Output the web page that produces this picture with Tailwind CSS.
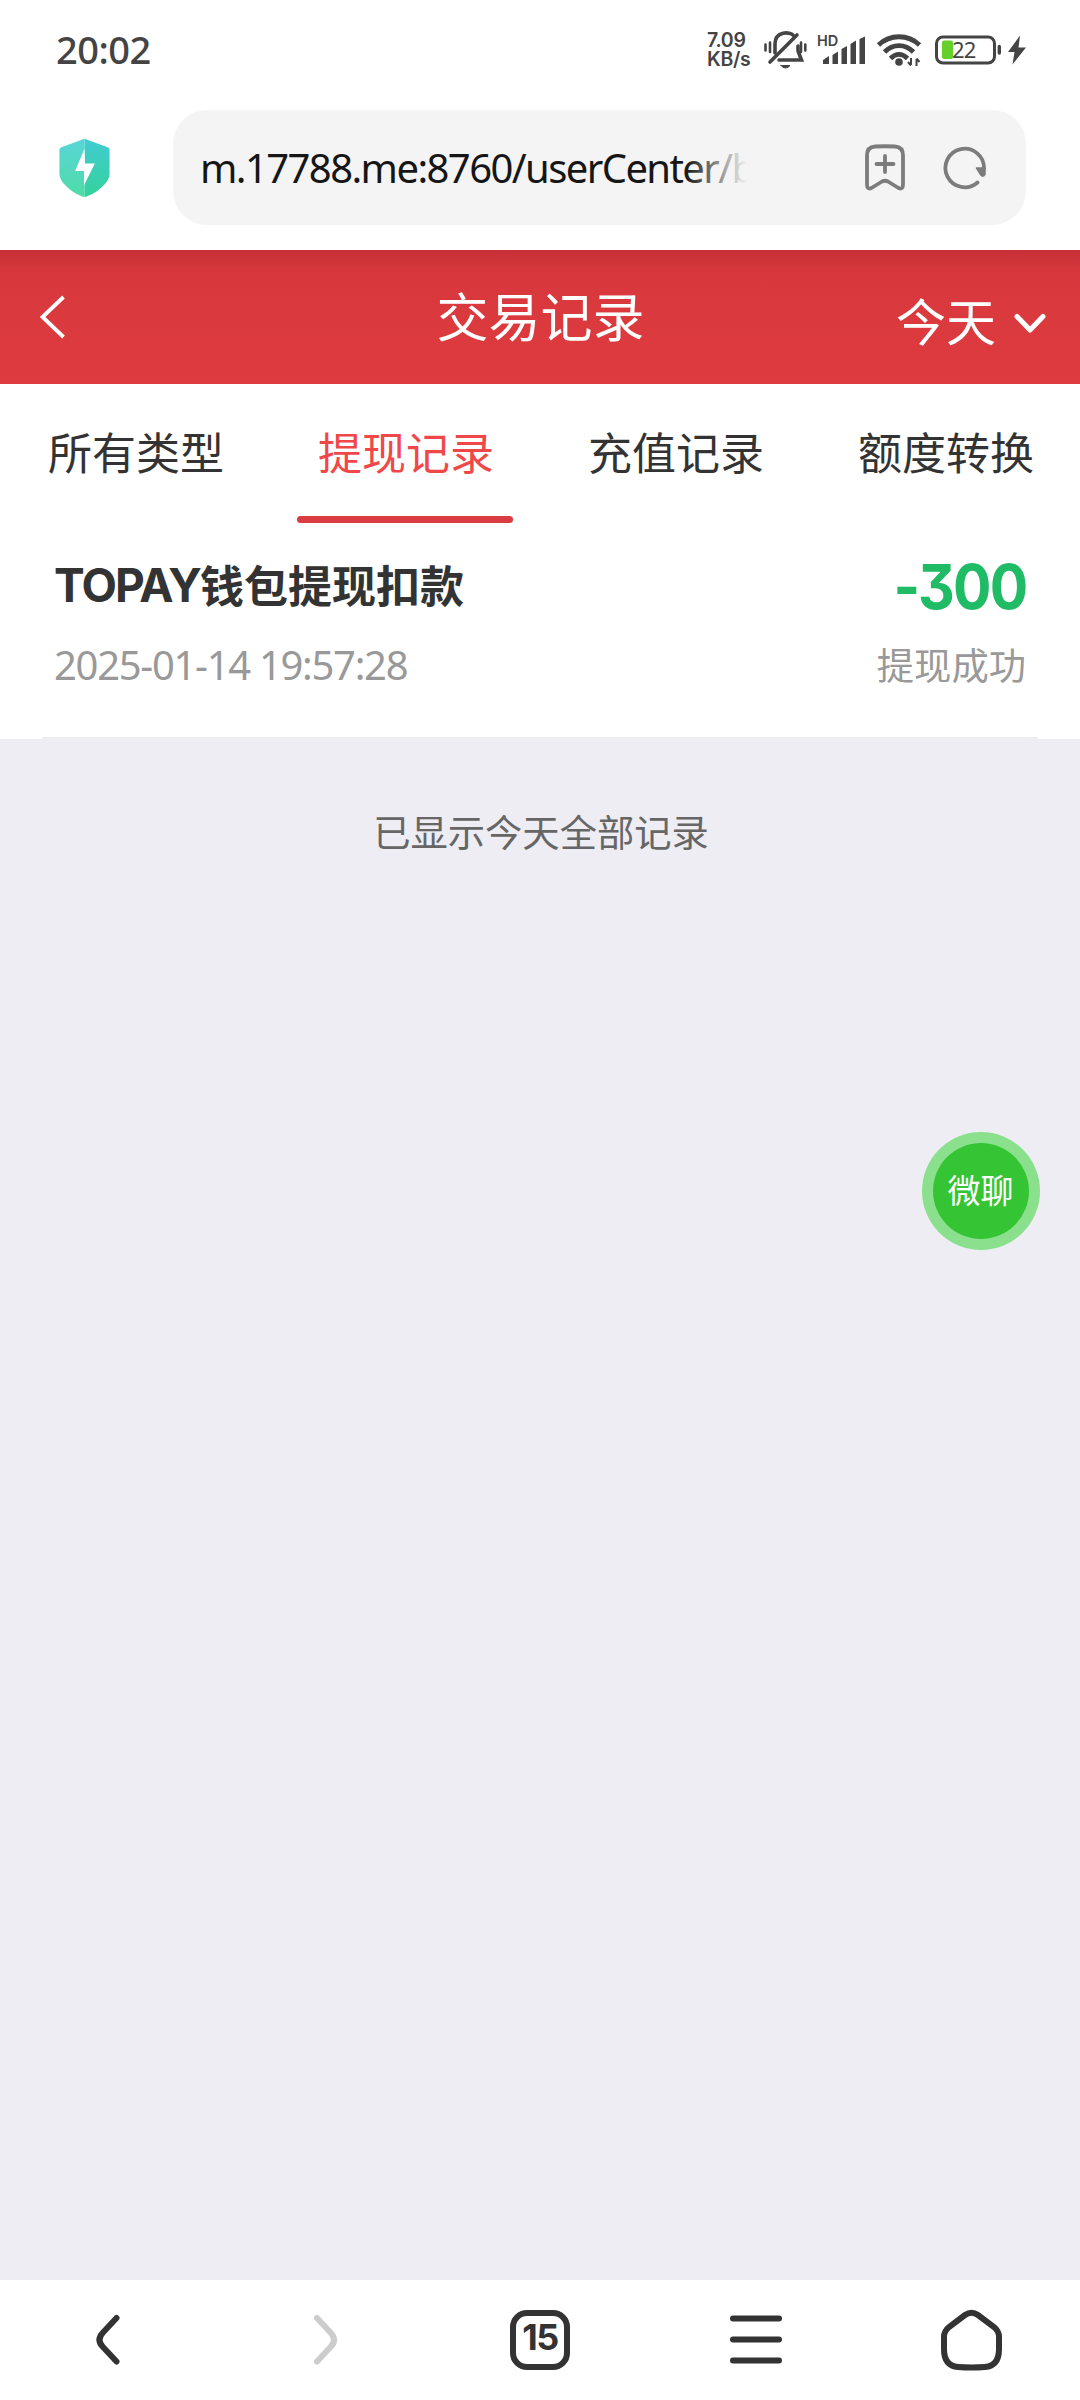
<!DOCTYPE html>
<html lang="zh-CN">
<head>
<meta charset="utf-8">
<title>交易记录</title>
<script src="https://cdn.jsdelivr.net/npm/@tailwindcss/browser@4"></script>
</head>
<body class="w-[1080px] h-[2400px] flex flex-col bg-[#eeedf3] overflow-hidden font-['Noto_Sans_CJK_SC',sans-serif] text-[#333]">

<!-- Status bar -->
<div class="h-[100px] shrink-0 bg-white flex items-center pl-[56px] pr-[54px] text-[#444]">
  <span class="font-['Noto_Sans'] font-medium text-[38px] leading-none tracking-[-0.5px] pb-[3px]">20:02</span>
  <div class="ml-auto flex items-center">
    <div class="w-[56px] flex flex-col font-['Inter'] font-semibold text-[19.500px] leading-[19.500px] tracking-[-0.3px]"><span>7.09</span><span>KB/s</span></div>
    <svg class="w-[44px] h-[40px]" viewBox="763 30 44 40" fill="none" stroke="#444" stroke-width="3.6" stroke-linecap="round">
      <path d="M775 53V44C775 31 790 31 794 36M798 46V51L801.500 60H779"/><path d="M770 62L797 35"/><path d="M781 65.500H790Q788 68 785.500 68T781 65.500Z" fill="#444" stroke-width="1"/><path d="M765.500 44.500V50.500M770 42.500V52M801 42.500V52M805.300 44.500V50.500" stroke-width="2.600"/>
    </svg>
    <svg class="ml-[10px] w-[50px] h-[36px]" viewBox="817 32 50 36" fill="#444">
      <text x="817" y="46" font-family="Inter" font-weight="600" font-size="14.500" letter-spacing="0">HD</text>
      <path d="M823 64V60L829 56V64ZM832.500 64V55L838 51.500V64ZM841.500 64V49L847 46V64ZM850.500 64V44L856 40.500V64ZM859.500 64V39L865 36.500V64Z"/>
    </svg>
    <svg class="ml-[9px] w-[46px] h-[36px]" viewBox="876 32 46 36" fill="none" stroke="#444" stroke-width="4.800">
      <path d="M878.500 45C890 34 908 34 919.500 45M884.500 52C893 43.500 905 43.500 913.500 52M890.500 58.500C896 53 902 53 907.500 58.500"/><circle cx="899" cy="62" r="3.800" fill="#444" stroke="none"/><path d="M911 58V65M908 62L911 65.500M916.500 66V59M919.500 62L916.500 58.500" stroke-width="2"/>
    </svg>
    <svg class="ml-[12px] w-[92px] h-[36px]" viewBox="934 32 92 36" fill="none">
      <rect x="936.500" y="37" width="58" height="26" rx="6.500" stroke="#444" stroke-width="3"/><rect x="942" y="40.500" width="11" height="18.500" rx="2" fill="#67cf2b"/><path d="M999.300 46.500V53" stroke="#444" stroke-width="3.400" stroke-linecap="round"/>
      <text x="952" y="57.500" font-family="Noto Sans" font-weight="400" font-size="22" letter-spacing="-0.800" fill="#444">22</text>
      <path d="M1020 35.500L1008 52H1014.500L1012.500 64.500L1026 47.500H1018.500Z" fill="#444"/>
    </svg>
  </div>
</div>

<!-- Address bar -->
<div class="h-[150px] shrink-0 bg-white flex items-start pt-[10px]">
  <svg class="ml-[59px] mt-[28px] w-[51px] h-[60px]" viewBox="0 0 51 61">
    <defs><linearGradient id="sl" x1="0" y1="0" x2="0" y2="1"><stop stop-color="#58d5d8"/><stop offset="1" stop-color="#4fdca6"/></linearGradient><linearGradient id="sr" x1="0" y1="0" x2="0" y2="1"><stop stop-color="#42ccd2"/><stop offset="1" stop-color="#34d29b"/></linearGradient></defs>
    <path d="M25.500 1Q23.500 1 22 2L2 9.500Q0 10.500 0 12V36Q0 41 4 46Q12 55 22 59Q24 60 25.500 60Z" fill="url(#sl)"/>
    <path d="M25.500 1Q27.500 1 29 2L49 9.500Q51 10.500 51 12V36Q51 41 47 46Q39 55 29 59Q27 60 25.500 60Z" fill="url(#sr)"/>
    <path d="M25.500 11L16 33.500H25V48L36 26H26Z" fill="#fff"/>
  </svg>
  <div class="ml-[63px] w-[853px] h-[115px] rounded-[34px] bg-[#f4f4f4] flex items-center pl-[27px] pr-[39px]">
    <div class="relative w-[547px] h-[60px] overflow-hidden whitespace-nowrap font-['Noto_Sans'] text-[40px] leading-[60px] tracking-[-1.58px] text-[#161616]">m.17788.me:8760/userCenter/b
      <div class="absolute right-0 top-0 h-full w-[62px] bg-linear-to-r from-[#f4f4f4]/0 to-[#f4f4f4]"></div>
    </div>
    <svg class="ml-auto w-[40px] h-[47px]" viewBox="865 143.500 40 47" fill="none" stroke="#7c7c7c" stroke-width="3.800" stroke-linecap="round" stroke-linejoin="round"><path d="M867 155Q867 146.500 875 146Q885 145.500 895 146Q903 146.500 903 155V184Q903 189.500 898.500 187.500L888 181Q885 179.500 882 181L871.500 187.500Q867 189.500 867 184Z"/><path d="M876.500 163.500H893.500M885 155.500V171.500"/></svg>
    <svg class="ml-[38px] w-[44px] h-[44px]" viewBox="943 145 44 44" fill="none" stroke="#7c7c7c" stroke-width="3.800" stroke-linecap="round"><path d="M977.500 181.500A19.300 19.300 0 1 1 984 168"/><path d="M976.500 167H985V173.500Q983 177 980.500 173.500Z" fill="#7c7c7c" stroke-width="1.500" stroke-linejoin="round"/></svg>
  </div>
</div>

<!-- Page header -->
<header class="h-[134px] shrink-0 grid grid-cols-3 items-center text-white bg-linear-to-b from-[#c63036] from-0% via-[#d8383d] via-18% to-[#de3b40] to-100%">
  <svg class="ml-[40px] -mt-[1px] w-[26px] h-[44px]" viewBox="40 295 26 44" fill="none" stroke="#fff" stroke-width="3.800"><path d="M63.500 297L42.500 317L63.500 337"/></svg>
  <h1 class="text-center text-[52px] leading-[52px] pb-[4px] pl-[1px]">交易记录</h1>
  <div class="flex items-center justify-end pr-[34px] pt-[8px] text-[50px] leading-[50px]"><span class="-mt-[4px]">今天</span>
    <svg class="ml-[18px] mt-[6px] w-[32px] h-[22px]" viewBox="1014 315 32 22" fill="none" stroke="#fff" stroke-width="5" stroke-linecap="round" stroke-linejoin="round"><path d="M1017 318.500L1030 332L1043 318.500"/></svg>
  </div>
</header>

<!-- Tabs -->
<nav class="h-[139px] shrink-0 bg-white grid grid-cols-4 text-center text-[44px] leading-[44px] pt-[45px]">
  <span class="pl-[2px]">所有类型</span>
  <div class="flex flex-col items-center text-[#f04848]"><span class="pl-[2px]">提现记录</span><i class="mt-[43px] w-[216px] h-[7px] rounded-full bg-[#d93c41]"></i></div>
  <span class="pl-[2px]">充值记录</span>
  <span class="pl-[2px]">额度转换</span>
</nav>

<!-- Record -->
<section class="h-[216px] shrink-0 bg-white px-[42px]">
  <div class="h-full border-b-2 border-[#eeedf3] px-[12px] flex justify-between">
    <div class="flex flex-col">
      <div class="mt-[37px] h-[50px] flex items-center font-bold text-[44px] leading-[50px]"><span class="w-[146px] whitespace-nowrap font-['Inter'] text-[46px] tracking-[-1.8px]">TOPAY</span><span class="-mt-[3px]">钱包提现扣款</span></div>
      <div class="mt-[30px] font-['Noto_Sans'] text-[40px] leading-[50px] tracking-[-1.3px] text-[#999]">2025-01-14 19:57:28</div>
    </div>
    <div class="flex flex-col items-end">
      <div class="mt-[31px] h-[66px] origin-right scale-x-[0.92] font-['Inter'] font-bold text-[62px] leading-[66px] tracking-[-2px] text-[#1fbb65] [font-feature-settings:'cv09']">-300</div>
      <div class="mt-[19px] text-[37.300px] leading-[50px] text-[#999]">提现成功</div>
    </div>
  </div>
</section>
<p class="mt-[67px] text-center text-[37.300px] leading-[50px] pl-[2px] text-[#666]">已显示今天全部记录</p>

<!-- Bottom navigation -->
<nav class="mt-auto h-[120px] shrink-0 bg-white grid grid-cols-5 items-center justify-items-center">
  <svg class="w-[60px] h-[66px]" viewBox="78 2307 60 66" fill="none" stroke="#333" stroke-width="6" stroke-linecap="round"><path d="M116.500 2318L103 2332.500Q96 2340 103 2347L116.500 2361.500"/></svg>
  <svg class="w-[60px] h-[66px]" viewBox="294 2307 60 66" fill="none" stroke="#ccc" stroke-width="6" stroke-linecap="round"><path d="M317 2318L330.500 2332.500Q337.500 2340 330.500 2347L317 2361.500"/></svg>
  <div class="w-[60px] h-[60px] rounded-[17px] border-[6px] border-[#333] flex justify-center font-['Inter'] font-bold text-[36px] leading-[42px] tracking-[-1.5px]">15</div>
  <svg class="w-[60px] h-[66px]" viewBox="726 2307 60 66" stroke="#333" stroke-width="6" stroke-linecap="round"><path d="M733 2318.500H779M733 2339.500H779M733 2360.500H779"/></svg>
  <svg class="w-[66px] h-[66px]" viewBox="939 2307 66 66" fill="none" stroke="#333" stroke-width="6"><path d="M965 2315Q971.500 2310.500 978 2315L994 2327Q999 2331 999 2337V2349Q999 2366 985 2367Q971.500 2368 958 2367Q944 2366 944 2349V2337Q944 2331 949 2327Z"/></svg>
</nav>

<!-- Floating chat button -->
<div class="absolute left-[922px] top-[1132px] w-[118px] h-[118px] rounded-full bg-[#8be08d] p-[11px]"><div class="w-full h-full rounded-full bg-[#34c434] text-white text-[33px] flex items-center justify-center leading-none pb-[4px] pr-[1px]">微聊</div></div>
</body>
</html>
